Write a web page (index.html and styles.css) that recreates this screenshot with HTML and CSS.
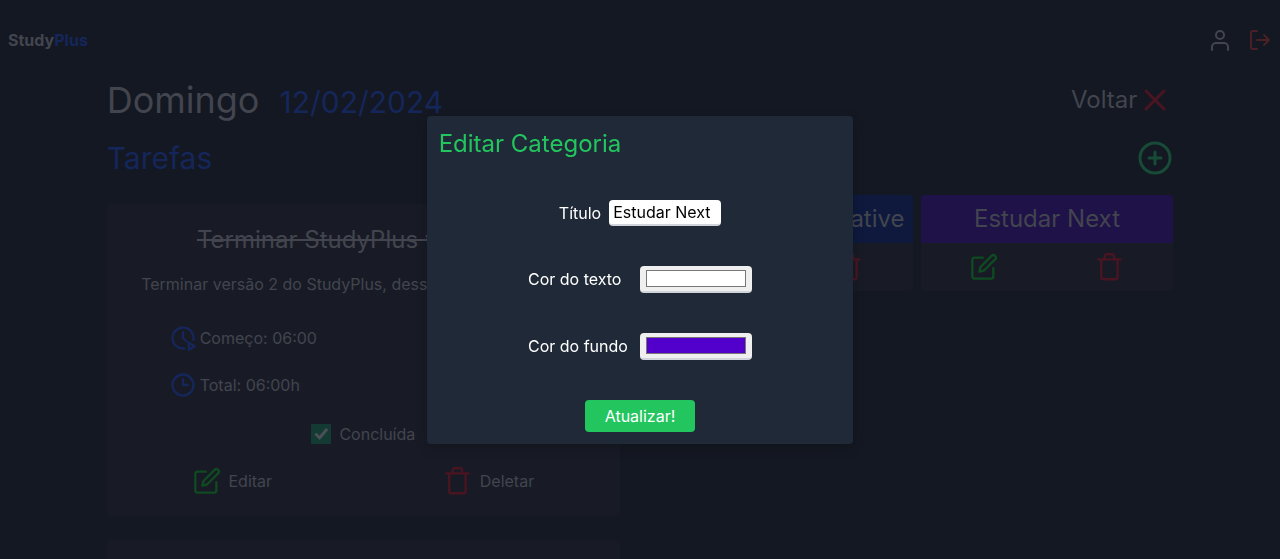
FILE: index.html
```html
<!DOCTYPE html>
<html lang="pt-BR">
<head>
<meta charset="utf-8">
<meta name="viewport" content="width=device-width, initial-scale=1">
<title>StudyPlus</title>
<link rel="stylesheet" href="styles.css">
</head>
<body>
<svg class="sprite" aria-hidden="true">
  <symbol id="edit" viewBox="0 0 24 24"><path d="M11 4H4a2 2 0 0 0-2 2v14a2 2 0 0 0 2 2h14a2 2 0 0 0 2-2v-7"/><path d="M18.5 2.5a2.121 2.121 0 0 1 3 3L12 15l-4 1 1-4 9.500-9.500z"/></symbol>
  <symbol id="trash" viewBox="0 0 24 24"><path d="M2 5.500h19M18.500 5.500v15a2 2 0 0 1-2 2h-10a2 2 0 0 1-2-2v-15m3 0V3a2 2 0 0 1 2-2h4a2 2 0 0 1 2 2v2.500"/></symbol>
</svg>
<header class="topbar">
  <a class="logo" href="#">Study<span class="blue">Plus</span></a>
  <nav class="topnav">
    <a class="muted" href="#" aria-label="Perfil"><svg class="icon icon-s" viewBox="0 0 24 24"><path d="M20 22v-3a4 4 0 0 0-4-4H8a4 4 0 0 0-4 4v3"/><circle cx="12" cy="7" r="4"/></svg></a>
    <a class="logout" href="#" aria-label="Sair"><svg class="icon icon-s" viewBox="0 0 24 24"><path d="M9 21H5a2 2 0 0 1-2-2V5a2 2 0 0 1 2-2h4M16 17l5-5-5-5M21 12H9"/></svg></a>
  </nav>
</header>
<main class="container">
  <div class="day">
    <h1 class="day-name">Domingo</h1>
    <span class="date">12/02/2024</span>
    <a class="back" href="#">Voltar<svg class="icon icon-l red" viewBox="0 0 24 24"><path d="M6 6l12 12M18 6L6 18"/></svg></a>
  </div>
  <div class="columns">
    <section class="tasks">
      <h2 class="section-title">Tarefas</h2>
      <article class="task">
        <h3 class="task-title">Terminar StudyPlus versão 2!</h3>
        <p class="task-text">Terminar versão 2 do StudyPlus, dessa vez feito em Nextjs</p>
        <p class="time"><svg class="icon blue" viewBox="0 0 24 24"><path d="M12 7v5l3 3M17 22l5-3-5-3zM13.017 20.943a9 9 0 1 1 7.831-7.292"/></svg>Começo: 06:00</p>
        <p class="time"><svg class="icon blue" viewBox="0 0 24 24"><circle cx="12" cy="12" r="9"/><path d="M12 7v5h4"/></svg>Total: 06:00h</p>
        <label class="done"><input class="check" type="checkbox" checked>Concluída</label>
        <div class="task-actions">
          <button class="action" type="button"><svg class="icon green"><use href="#edit"/></svg>Editar</button>
          <button class="action" type="button"><svg class="icon red"><use href="#trash"/></svg>Deletar</button>
        </div>
      </article>
      <article class="task"></article>
    </section>
    <section class="categories">
      <button class="add" type="button" aria-label="Adicionar categoria"><svg class="icon icon-l" viewBox="0 0 24 24"><circle cx="12" cy="12" r="10"/><path d="M12 8v8M8 12h8"/></svg></button>
      <div class="category-list">
        <article class="category">
          <h3 class="category-name navy">Estudar React Native</h3>
          <div class="category-actions">
            <button class="action" type="button" aria-label="Editar"><svg class="icon green"><use href="#edit"/></svg></button>
            <button class="action" type="button" aria-label="Deletar"><svg class="icon red"><use href="#trash"/></svg></button>
          </div>
        </article>
        <article class="category">
          <h3 class="category-name purple">Estudar Next</h3>
          <div class="category-actions">
            <button class="action" type="button" aria-label="Editar"><svg class="icon green"><use href="#edit"/></svg></button>
            <button class="action" type="button" aria-label="Deletar"><svg class="icon red"><use href="#trash"/></svg></button>
          </div>
        </article>
      </div>
    </section>
  </div>
</main>
<div class="overlay">
  <form class="modal" role="dialog" aria-labelledby="modal-title">
    <h2 class="modal-title" id="modal-title">Editar Categoria</h2>
    <div class="field"><label for="title">Título</label><input class="input text-input" id="title" type="text" value="Estudar Next"></div>
    <div class="field color-field"><label for="fg">Cor do texto</label><input class="input color-input" id="fg" type="color" value="#ffffff"></div>
    <div class="field color-field"><label for="bg">Cor do fundo</label><input class="input color-input" id="bg" type="color" value="#5200cc"></div>
    <button class="submit" type="button">Atualizar!</button>
  </form>
</div>
</body>
</html>
```
FILE: styles.css
```css
* { box-sizing: border-box; margin: 0; }
body {
  height: 100vh;
  overflow: hidden;
  background: #141822;
  color: #42454e;
  font: 16px/24px Inter, "Liberation Sans", sans-serif;
}
h1, h2, h3 { font-weight: 400; }
a { color: inherit; text-decoration: none; }
button { padding: 0; border: 0; background: none; color: inherit; font: inherit; cursor: pointer; }
.sprite { display: none; }
.icon {
  display: block;
  flex: none;
  width: 28px;
  height: 28px;
  fill: none;
  stroke: currentColor;
  stroke-width: 2;
  stroke-linecap: round;
  stroke-linejoin: round;
}
.icon-s { width: 24px; height: 24px; }
.icon-l { width: 36px; height: 36px; }
.blue { color: #15265a; }
.green { color: #0f4a20; }
.red { color: #4a1521; }

.topbar { display: flex; align-items: center; justify-content: space-between; height: 80px; padding: 0 8px; }
.logo { font-weight: 700; }
.topnav { display: flex; gap: 16px; }
.logout { color: #4b2024; }

.container { width: calc(100% * 5 / 6); margin: 0 auto; }
.day { display: flex; align-items: center; gap: 20px; }
.day-name { font-size: 36px; line-height: 40px; }
.date { padding-top: 4px; color: #15265a; font-size: 30px; line-height: 36px; }
.back { display: flex; align-items: center; margin-left: auto; font-size: 24px; line-height: 32px; }

.columns { display: grid; grid-template-columns: 1fr 1fr; gap: 40px; padding-top: 20px; }
.section-title { margin-bottom: 28px; color: #15265a; font-size: 30px; line-height: 36px; }
.task { min-height: 312px; margin-bottom: 24px; padding: 20px 0; border-radius: 4px; background: #181b26; }
.task-title { margin-bottom: 16px; font-size: 24px; line-height: 32px; text-align: center; text-decoration: line-through; }
.task-text { margin-bottom: 28px; text-align: center; }
.time { display: flex; align-items: center; gap: 3px; margin-bottom: 19px; padding-left: 62px; }
.done { display: flex; align-items: center; justify-content: center; gap: 8px; padding-top: 4px; }
.check { appearance: none; display: grid; width: 20px; height: 20px; margin: 0; border-radius: 1px; background: #133a33; }
.check::before {
  content: "";
  place-self: center;
  width: 14px;
  height: 12px;
  background: #4c4f58;
  clip-path: polygon(0 55%, 15% 40%, 36% 64%, 83% 0, 100% 14%, 38% 100%);
}
.task-actions { display: flex; justify-content: space-around; padding-top: 21px; }
.action { display: flex; align-items: center; gap: 8px; }

.categories { display: flex; flex-direction: column; }
.add { align-self: flex-end; color: #174a37; }
.category-list { display: grid; grid-template-columns: 1fr 1fr; gap: 8px; padding-top: 19px; }
.category { overflow: hidden; border-radius: 4px; background: #181b26; }
.category-name { padding: 8px 0; font-size: 24px; line-height: 32px; text-align: center; white-space: nowrap; }
.navy { background: #0e193d; }
.purple { background: #1f1248; }
.category-actions { display: flex; justify-content: space-around; padding: 10px 0; }

.overlay { position: fixed; inset: 0; display: flex; align-items: center; justify-content: center; }
.modal {
  display: flex;
  flex-direction: column;
  align-items: center;
  gap: 40px;
  width: calc(100% / 3);
  padding: 12px;
  border-radius: 4px;
  background: #202937;
  color: #fff;
  box-shadow: 0 4px 12px rgba(0, 0, 0, 0.2);
}
.modal-title { align-self: stretch; color: #22c55e; font-size: 24px; line-height: 32px; }
.field { display: flex; align-items: center; gap: 8px; }
.input { width: 112px; border: 0; border-bottom: 2px solid #d1d5db; border-radius: 4px; }
.text-input { height: 26px; padding: 0 4px; background: #fff; color: #000; font: inherit; }
.color-field { display: grid; grid-template-columns: 112px 112px; gap: 0; }
.color-input { height: 27px; padding: 4px 6px; background: #efefef; }
.color-input::-webkit-color-swatch-wrapper { padding: 0; }
.color-input::-webkit-color-swatch { border: 1px solid #777; border-radius: 0; }
.submit { padding: 4px 20px; border-radius: 4px; background: #22c55e; }
```
